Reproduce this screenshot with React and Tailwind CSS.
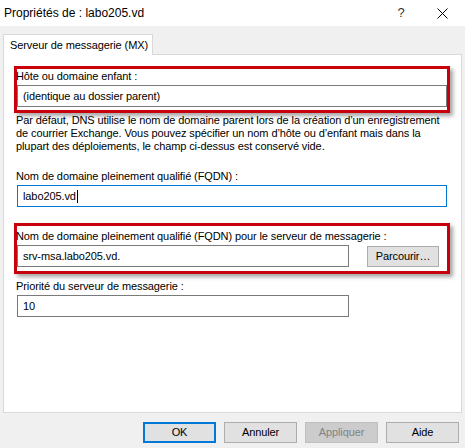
const font = { fontFamily: '"Segoe UI", "Liberation Sans", Arial, sans-serif' };

function Field({ children, focused, className = '' }) {
  return (
    <div
      className={`h-[22px] flex items-center pl-[5px] bg-white border ${
        focused ? 'border-[#0078d7]' : 'border-[#7a7a7a]'
      } ${className}`}
    >
      {children}
    </div>
  );
}

function Label({ children }) {
  return <div className="h-[15px] leading-[12px] -ml-px whitespace-nowrap">{children}</div>;
}

function Marked({ children, className = '' }) {
  // red annotation frame with a soft drop shadow
  return (
    <div
      className={`-mx-[3px] border-[3px] border-[#c8000a] shadow-[3px_3px_4px_rgba(0,0,0,0.35)] ${className}`}
    >
      {children}
    </div>
  );
}

function DlgButton({ children, variant }) {
  const styles = {
    default: 'border-2 border-[#0078d7] bg-[#e1e1e1] text-black',
    normal: 'border border-[#adadad] bg-[#e1e1e1] text-black',
    disabled: 'border border-[#bfbfbf] bg-[#cccccc] text-[#838383]',
  };
  return (
    <div className={`w-[73px] h-[21px] flex items-center justify-center ${styles[variant]}`}>
      {children}
    </div>
  );
}

export default function App() {
  return (
    <div
      className="w-[465px] h-[448px] bg-[#f0f0f0] text-[11px] tracking-[-0.1px] text-black flex flex-col overflow-hidden"
      style={font}
    >
      {/* title bar */}
      <div className="h-[26px] bg-white flex items-center shrink-0 text-[12px] tracking-normal">
        <span className="pl-[4px] flex-1">Propriétés de : labo205.vd</span>
        <span className="w-[20px] text-center text-[13px] text-[#333] mr-[26px]">?</span>
        <svg width="11" height="11" viewBox="0 0 11 11" className="mr-[17px]">
          <path d="M0.5 0.5 L10.5 10.5 M10.5 0.5 L0.5 10.5" stroke="#000" strokeWidth="1" />
        </svg>
      </div>

      {/* tab strip */}
      <div className="pl-[3px] pt-[8px] flex shrink-0">
        <div className="w-[150px] h-[21px] bg-white border border-b-0 border-[#d9d9d9] pl-[6px] leading-[20px] whitespace-nowrap -mb-px relative z-10">
          Serveur de messagerie (MX)
        </div>
      </div>

      {/* tab page */}
      <div className="mx-[3px] h-[359px] bg-white border border-[#d9d9d9] pl-[13px] pr-[14px] pt-[11px] flex flex-col shrink-0">
        <Marked className="pt-[1px] pb-[3px]">
          <Label>Hôte ou domaine enfant :</Label>
          <Field>(identique au dossier parent)</Field>
        </Marked>

        <p className="-ml-px mt-[1px] leading-[13px] whitespace-nowrap">
          Par défaut, DNS utilise le nom de domaine parent lors de la création d’un enregistrement
          <br />
          de courrier Exchange. Vous pouvez spécifier un nom d’hôte ou d’enfant mais dans la
          <br />
          plupart des déploiements, le champ ci-dessus est conservé vide.
        </p>

        <div className="mt-[17px]">
          <Label>Nom de domaine pleinement qualifié (FQDN) :</Label>
          <Field focused>
            labo205.vd<span className="w-px h-[13px] bg-black ml-[1px]" />
          </Field>
        </div>

        <Marked className="mt-[16px] pt-[4px] pb-[4px]">
          <Label>Nom de domaine pleinement qualifié (FQDN) pour le serveur de messagerie :</Label>
          <div className="flex items-center">
            <Field className="w-[332px]">srv-msa.labo205.vd.</Field>
            <div className="ml-[18px] w-[72px] h-[21px] flex items-center justify-center border border-[#adadad] bg-[#e1e1e1]">
              Parcourir…
            </div>
          </div>
        </Marked>

        <div className="mt-[6px]">
          <Label>Priorité du serveur de messagerie :</Label>
          <Field className="w-[332px]">10</Field>
        </div>
      </div>

      {/* dialog buttons */}
      <div className="flex justify-end gap-[8px] pr-[6px] pt-[9px]">
        <DlgButton variant="default">OK</DlgButton>
        <DlgButton variant="normal">Annuler</DlgButton>
        <DlgButton variant="disabled">Appliquer</DlgButton>
        <DlgButton variant="normal">Aide</DlgButton>
      </div>
    </div>
  );
}
